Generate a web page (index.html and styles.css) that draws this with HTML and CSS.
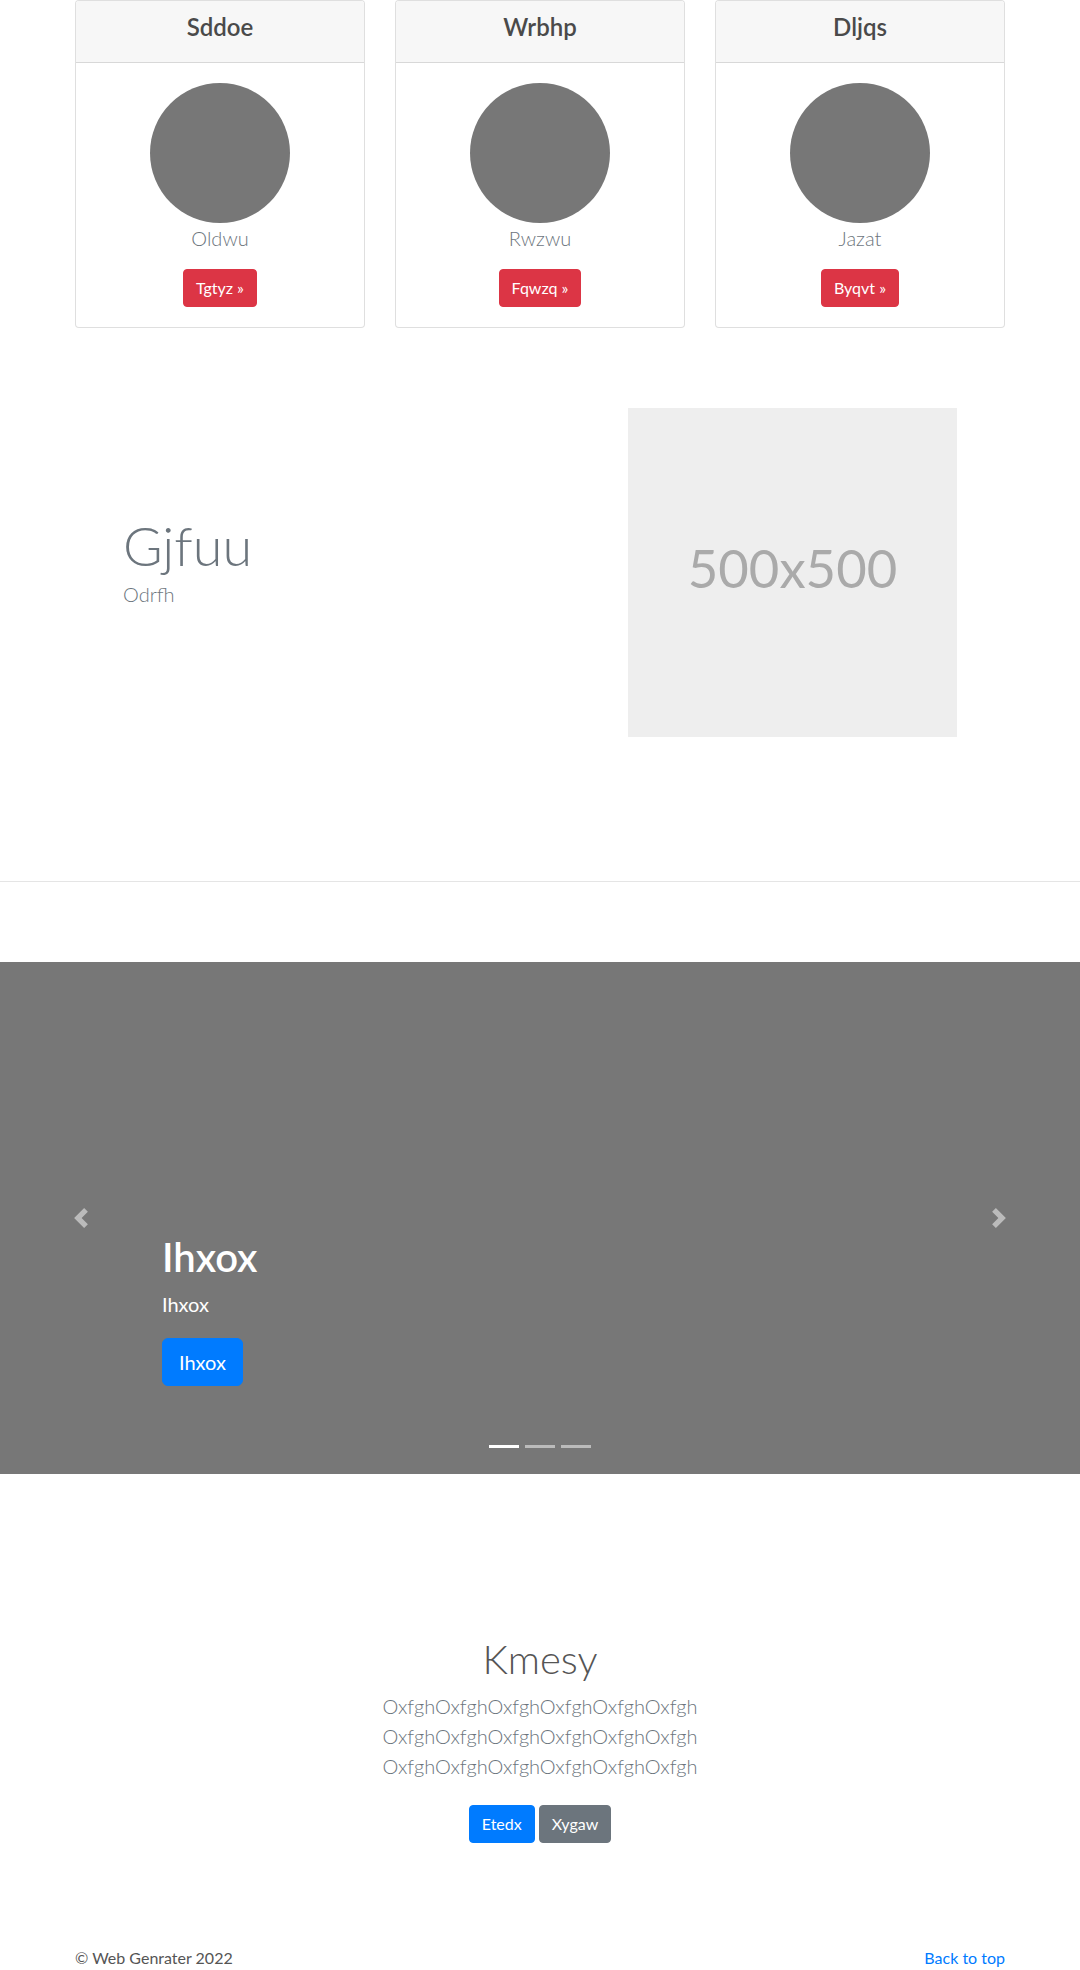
FILE: index.html
```html
<!DOCTYPE html>
<html lang="en">
<head>
<meta charset="utf-8">
<title>Web Genrater</title>
<link rel="stylesheet" href="styles.css">
</head>
<body>
<main>
  <section class="container pricing">
    <div class="card">
      <div class="card-header"><h4 class="card-title">Sddoe</h4></div>
      <div class="card-body">
        <div class="avatar"></div>
        <p class="card-name">Oldwu</p>
        <a class="btn btn-danger" href="#">Tgtyz &raquo;</a>
      </div>
    </div>
    <div class="card">
      <div class="card-header"><h4 class="card-title">Wrbhp</h4></div>
      <div class="card-body">
        <div class="avatar"></div>
        <p class="card-name">Rwzwu</p>
        <a class="btn btn-danger" href="#">Fqwzq &raquo;</a>
      </div>
    </div>
    <div class="card">
      <div class="card-header"><h4 class="card-title">Dljqs</h4></div>
      <div class="card-body">
        <div class="avatar"></div>
        <p class="card-name">Jazat</p>
        <a class="btn btn-danger" href="#">Byqvt &raquo;</a>
      </div>
    </div>
  </section>

  <section class="container feature">
    <div class="feature-text">
      <h1 class="feature-title">Gjfuu</h1>
      <p class="feature-sub">Odrfh</p>
    </div>
    <div class="feature-media">
      <svg class="placeholder" width="329" height="329" viewBox="0 0 500 500" role="img" aria-label="500x500">
        <rect width="100%" height="100%" fill="#eeeeee"/>
        <text x="50%" y="50%" dy=".3em" text-anchor="middle" fill="#aaaaaa" class="placeholder-text">500x500</text>
      </svg>
    </div>
  </section>

  <hr class="divider">

  <div class="carousel">
    <ol class="indicators">
      <li class="indicator active"></li>
      <li class="indicator"></li>
      <li class="indicator"></li>
    </ol>
    <div class="caption">
      <h1 class="caption-title">Ihxox</h1>
      <p class="caption-text">Ihxox</p>
      <div class="caption-action"><a class="btn btn-lg btn-primary" href="#">Ihxox</a></div>
    </div>
    <a class="control control-prev" href="#" aria-label="Previous">
      <svg class="control-icon" viewBox="0 0 8 8" width="20" height="20"><path fill="#fff" d="M5.25 0l-4 4 4 4 1.5-1.5L4.25 4l2.5-2.5L5.25 0z"/></svg>
    </a>
    <a class="control control-next" href="#" aria-label="Next">
      <svg class="control-icon" viewBox="0 0 8 8" width="20" height="20"><path fill="#fff" d="M2.75 0l-1.5 1.5L3.75 4l-2.5 2.5L2.75 8l4-4-4-4z"/></svg>
    </a>
  </div>

  <section class="jumbo">
    <div class="jumbo-inner">
      <h1 class="jumbo-title">Kmesy</h1>
      <p class="jumbo-lead">OxfghOxfghOxfghOxfghOxfghOxfgh<br>OxfghOxfghOxfghOxfghOxfghOxfgh<br>OxfghOxfghOxfghOxfghOxfghOxfgh</p>
      <div class="jumbo-actions">
        <a class="btn btn-primary" href="#">Etedx</a>
        <a class="btn btn-secondary" href="#">Xygaw</a>
      </div>
    </div>
  </section>
</main>

<footer class="container footer">
  <p class="footer-copy">&copy; Web Genrater 2022</p>
  <a class="footer-link" href="#">Back to top</a>
</footer>
</body>
</html>
```

FILE: styles.css
```css
* {
  box-sizing: border-box;
}

html, body {
  margin: 0;
  padding: 0;
}

body {
  font-family: "Lato", "Open Sans", "Liberation Sans", sans-serif;
  font-size: 16px;
  line-height: 1.5;
  color: #555555;
  background: #ffffff;
}

.container {
  width: 100%;
  max-width: 960px;
  margin: 0 auto;
  padding: 0 15px;
}

/* ---------- buttons ---------- */
.btn {
  display: inline-block;
  padding: 6px 12px;
  font-size: 16px;
  line-height: 1.5;
  border: 1px solid transparent;
  border-radius: 4px;
  color: #ffffff;
  text-decoration: none;
  font-weight: 400;
}

.btn-lg {
  padding: 8px 16px;
  font-size: 20px;
  border-radius: 6px;
}

.btn-danger {
  background: #dc3545;
  border-color: #dc3545;
}

.btn-primary {
  background: #007bff;
  border-color: #007bff;
}

.btn-secondary {
  background: #6c757d;
  border-color: #6c757d;
}

/* ---------- pricing cards ---------- */
.pricing {
  display: grid;
  grid-template-columns: repeat(3, 1fr);
  gap: 30px;
}

.card {
  border: 1px solid rgba(0, 0, 0, 0.125);
  border-radius: 4px;
  background: #ffffff;
  overflow: hidden;
  text-align: center;
}

.card-header {
  background: #f7f7f7;
  border-bottom: 1px solid rgba(0, 0, 0, 0.125);
  padding: 12px 20px;
}

.card-title {
  margin: 0 0 8px;
  font-size: 24px;
  line-height: 1.2;
  font-weight: 600;
  color: #4a4a4a;
}

.card-body {
  padding: 20px;
  display: flex;
  flex-direction: column;
  align-items: center;
}

.avatar {
  width: 140px;
  height: 140px;
  border-radius: 50%;
  background: #777777;
}

.card-name {
  margin: 0 0 16px;
  font-size: 20px;
  line-height: 1.5;
  font-weight: 300;
  color: #6c757d;
}

/* ---------- feature ---------- */
.feature {
  display: grid;
  grid-template-columns: 1fr 1fr;
  gap: 30px;
  padding-top: 80px;
  padding-bottom: 144px;
}

.feature-text {
  padding-left: 48px;
  padding-top: 106px;
}

.feature-title {
  margin: 0;
  font-size: 54px;
  line-height: 1.2;
  font-weight: 300;
  color: #6c757d;
}

.feature-sub {
  margin: 0 0 16px;
  font-size: 20px;
  line-height: 1.5;
  font-weight: 300;
  color: #6c757d;
}

.feature-media {
  display: flex;
  justify-content: flex-end;
  padding-right: 48px;
}

.placeholder {
  display: block;
}

.placeholder-text {
  font-family: "Lato", "Open Sans", sans-serif;
  font-size: 80px;
}

.divider {
  margin: 0;
  border: 0;
  border-top: 1px solid #e5e5e5;
}

/* ---------- carousel ---------- */
.carousel {
  position: relative;
  margin-top: 80px;
  height: 512px;
  background: #777777;
  display: flex;
  align-items: flex-end;
  padding: 0 15% 48px;
  color: #ffffff;
}

.caption {
  width: 100%;
  padding: 20px 0;
}

.caption-title {
  margin: 0 0 8px;
  font-size: 40px;
  line-height: 1.2;
  font-weight: 600;
}

.caption-text {
  margin: 0 0 19px;
  font-size: 20px;
  line-height: 1.5;
}

.caption-action {
  display: flex;
  margin-bottom: 20px;
}

.control {
  position: absolute;
  top: 0;
  bottom: 0;
  width: 15%;
  display: flex;
  align-items: center;
  justify-content: center;
  opacity: 0.5;
}

.control-prev {
  left: 0;
}

.control-next {
  right: 0;
}

.control-icon {
  display: block;
  width: 20px;
  height: 20px;
}

.indicators {
  position: absolute;
  left: 0;
  right: 0;
  bottom: 0;
  margin: 0 0 16px;
  padding: 0;
  list-style: none;
  display: flex;
  justify-content: center;
}

.indicator {
  width: 30px;
  height: 3px;
  box-sizing: content-box;
  margin: 0 3px;
  border-top: 10px solid transparent;
  border-bottom: 10px solid transparent;
  background: #ffffff;
  background-clip: padding-box;
  opacity: 0.5;
}

.indicator.active {
  opacity: 1;
}

/* ---------- jumbotron ---------- */
.jumbo {
  padding: 161px 15px 55px;
  text-align: center;
}

.jumbo-inner {
  max-width: 640px;
  margin: 0 auto;
}

.jumbo-title {
  margin: 0 0 8px;
  font-size: 40px;
  line-height: 1.2;
  font-weight: 300;
  color: #555555;
}

.jumbo-lead {
  margin: 0;
  font-size: 20px;
  line-height: 1.5;
  font-weight: 300;
  color: #6c757d;
}

.jumbo-actions {
  display: flex;
  justify-content: center;
  gap: 4px;
  padding-top: 24px;
}

/* ---------- footer ---------- */
.footer {
  display: flex;
  justify-content: space-between;
  align-items: flex-start;
  padding-top: 48px;
  padding-bottom: 48px;
}

.footer-copy {
  margin: 0;
  color: #555555;
}

.footer-link {
  color: #007bff;
  text-decoration: none;
}
```
